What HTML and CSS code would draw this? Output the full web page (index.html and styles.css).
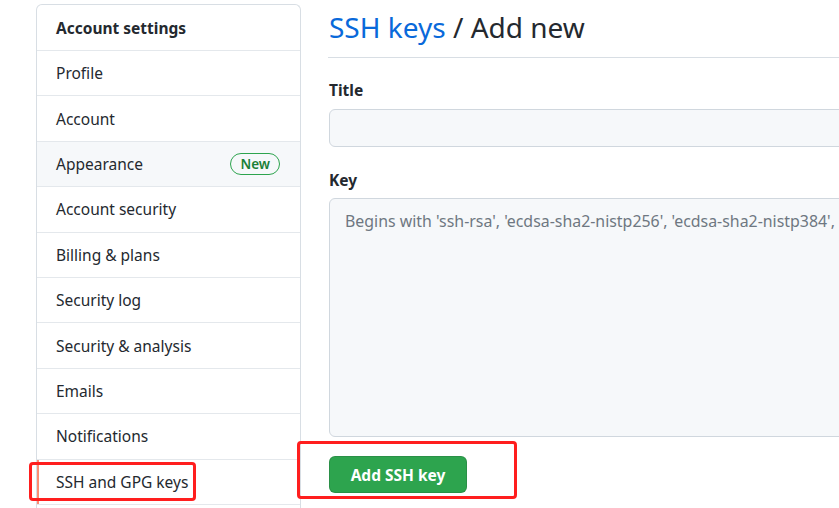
FILE: index.html
```html
<!DOCTYPE html>
<html>
<head>
<meta charset="utf-8">
<link rel="stylesheet" href="styles.css">
</head>
<body>
<div class="page">
  <nav class="menu">
    <div class="menu-head">Account settings</div>
    <a class="menu-item">Profile</a>
    <a class="menu-item">Account</a>
    <a class="menu-item hover">Appearance <span class="badge">New</span></a>
    <a class="menu-item">Account security</a>
    <a class="menu-item">Billing &amp; plans</a>
    <a class="menu-item">Security log</a>
    <a class="menu-item">Security &amp; analysis</a>
    <a class="menu-item">Emails</a>
    <a class="menu-item">Notifications</a>
    <a class="menu-item selected">SSH and GPG keys<span class="mark mark-nav"></span></a>
    <div class="menu-rest"></div>
  </nav>
  <main class="content">
    <h1 class="title"><a class="crumb">SSH keys</a> / Add new</h1>
    <form class="form">
      <label class="label">Title</label>
      <input class="input" type="text">
      <label class="label key-label">Key</label>
      <textarea class="textarea" placeholder="Begins with 'ssh-rsa', 'ecdsa-sha2-nistp256', 'ecdsa-sha2-nistp384', 'ecdsa-sha2-nistp521', 'ssh-ed25519', 'sk-ecdsa-sha2-nistp256@openssh.com', or 'sk-ssh-ed25519@openssh.com'"></textarea>
      <div class="actions">
        <button class="btn" type="button">Add SSH key</button>
        <span class="mark mark-btn"></span>
      </div>
    </form>
  </main>
</div>
</body>
</html>
```

FILE: styles.css
```css
html, body {
  margin: 0;
  padding: 0;
  background: #ffffff;
  overflow: hidden;
}
body {
  font-family: "Noto Sans", "Open Sans", sans-serif;
  color: #24292f;
  width: 839px;
  height: 508px;
}
.page {
  display: flex;
  align-items: flex-start;
  padding: 4px 0 0 36px;
  width: 839px;
  height: 508px;
  box-sizing: border-box;
  overflow: hidden;
}
.menu {
  width: 265px;
  flex: none;
  box-sizing: border-box;
  border: 1px solid #d8dee4;
  border-bottom: 0;
  border-radius: 6px 6px 0 0;
  display: flex;
  flex-direction: column;
}
.menu-head {
  height: 45px;
  box-sizing: border-box;
  padding: 0 19px;
  display: flex;
  align-items: center;
  font-weight: 700;
  font-size: 15.5px;
}
.menu-item {
  position: relative;
  height: 45.4px;
  box-sizing: border-box;
  border-top: 1px solid #e4e8ec;
  padding: 0 20px 0 19px;
  display: flex;
  align-items: center;
  justify-content: space-between;
  font-size: 15.5px;
  color: #24292f;
}
.menu-rest {
  height: 10px;
  border-top: 1px solid #e4e8ec;
}
.menu-item.hover {
  background: #f6f8fa;
}
.menu-item.selected {
  box-shadow: inset 2px 0 0 #fd8c73;
}
.badge {
  border: 1px solid #2da44e;
  color: #1a7f37;
  border-radius: 12px;
  font-size: 13.5px;
  font-weight: 600;
  line-height: 20px;
  padding: 0 9px;
}
.content {
  flex: 1;
  min-width: 0;
  margin-left: 28px;
}
.title {
  margin: 0 0 0 -1px;
  font-weight: 400;
  font-size: 28px;
  line-height: 46px;
  padding: 0 0 7px 1px;
  border-bottom: 1px solid #d8dee4;
}
.crumb {
  color: #0969da;
}
.form {
  display: flex;
  flex-direction: column;
  align-items: flex-start;
}
.label {
  font-weight: 700;
  font-size: 15.5px;
  line-height: 22px;
  margin: 21px 0 8px;
}
.key-label {
  margin: 22px 0 7px;
}
.input, .textarea {
  box-sizing: border-box;
  width: 1700px;
  flex: none;
  background: #f6f8fa;
  border: 1px solid #d0d7de;
  border-radius: 6px;
  font-family: inherit;
}
.input {
  height: 38px;
}
.textarea {
  height: 239px;
  resize: none;
  padding: 11px 15px;
  font-size: 15.9px;
  line-height: 22px;
  color: #24292f;
}
.textarea::placeholder {
  color: #6e7781;
}
.actions {
  position: relative;
  margin-top: 19px;
}
.btn {
  width: 138px;
  height: 37px;
  background: #2da44e;
  color: #ffffff;
  border: 1px solid rgba(27,31,36,0.15);
  border-radius: 6px;
  font-family: inherit;
  font-weight: 700;
  font-size: 15.5px;
  padding: 0;
}
.mark {
  position: absolute;
  border: 3px solid #ff1e1e;
  border-radius: 4px;
  box-sizing: border-box;
  pointer-events: none;
}
.mark-nav {
  left: -8px;
  top: 2px;
  width: 167px;
  height: 39px;
}
.mark-btn {
  left: -32px;
  top: -15px;
  width: 220px;
  height: 58px;
}
```
